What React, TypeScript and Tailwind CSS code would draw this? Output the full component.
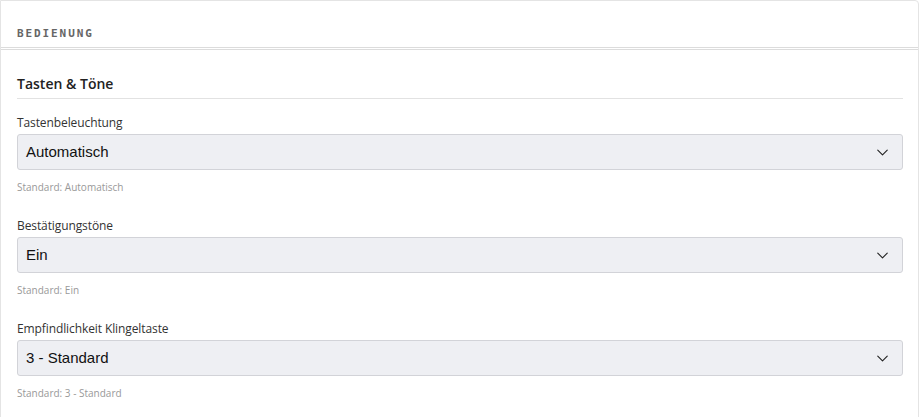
import { ChevronDown } from "lucide-react";

type SelectFieldProps = {
    label: string;
    value: string;
    hint: string;
};

function SelectField({ label, value, hint }: SelectFieldProps) {
    return (
        <div className="flex flex-col">
            <label className="text-[12px] leading-[18px] tracking-[-0.1px] text-[#333] font-['Open_Sans',sans-serif]">{label}</label>
            <div className="mt-[2px] flex h-[36px] items-center justify-between rounded-[3px] border border-[#d2d3d8] bg-[#eeeff3] pl-[8px] pr-[10px]">
                <span className="text-[15px] text-[#111] font-['Liberation_Sans',Arial,sans-serif]">{value}</span>
                <ChevronDown className="h-[19px] w-[19px] text-[#222]" strokeWidth={1.4} />
            </div>
            <p className="mt-[10px] text-[10px] leading-[14px] text-[#999] font-['Open_Sans',sans-serif]">{hint}</p>
        </div>
    );
}

export default function App() {
    return (
        <div className="h-[417px] w-[920px] overflow-hidden bg-white">
            <div className="h-[430px] w-[919px] rounded-tr-[4px] border border-[#e4e4e4] bg-white">
                {/* Header */}
                <div className="flex h-[49px] items-center border-b-[3px] border-double border-[#dcdcdc] px-[16px] pt-[20px]">
                    <h2 className="text-[11px] font-bold tracking-[1.9px] text-[#666] font-['DejaVu_Sans_Mono',monospace]">BEDIENUNG</h2>
                </div>

                {/* Content */}
                <div className="pl-[16px] pr-[15px] pt-[24px]">
                    <h3 className="border-b border-[#e2e2e2] pb-[4px] text-[14px] font-semibold leading-[20px] text-[#222] font-['Open_Sans',sans-serif]">
                        Tasten &amp; Töne
                    </h3>
                    <div className="mt-[15px] flex flex-col gap-[23px]">
                        <SelectField label="Tastenbeleuchtung" value="Automatisch" hint="Standard: Automatisch" />
                        <SelectField label="Bestätigungstöne" value="Ein" hint="Standard: Ein" />
                        <SelectField label="Empfindlichkeit Klingeltaste" value="3 - Standard" hint="Standard: 3 - Standard" />
                    </div>
                </div>
            </div>
        </div>
    );
}
